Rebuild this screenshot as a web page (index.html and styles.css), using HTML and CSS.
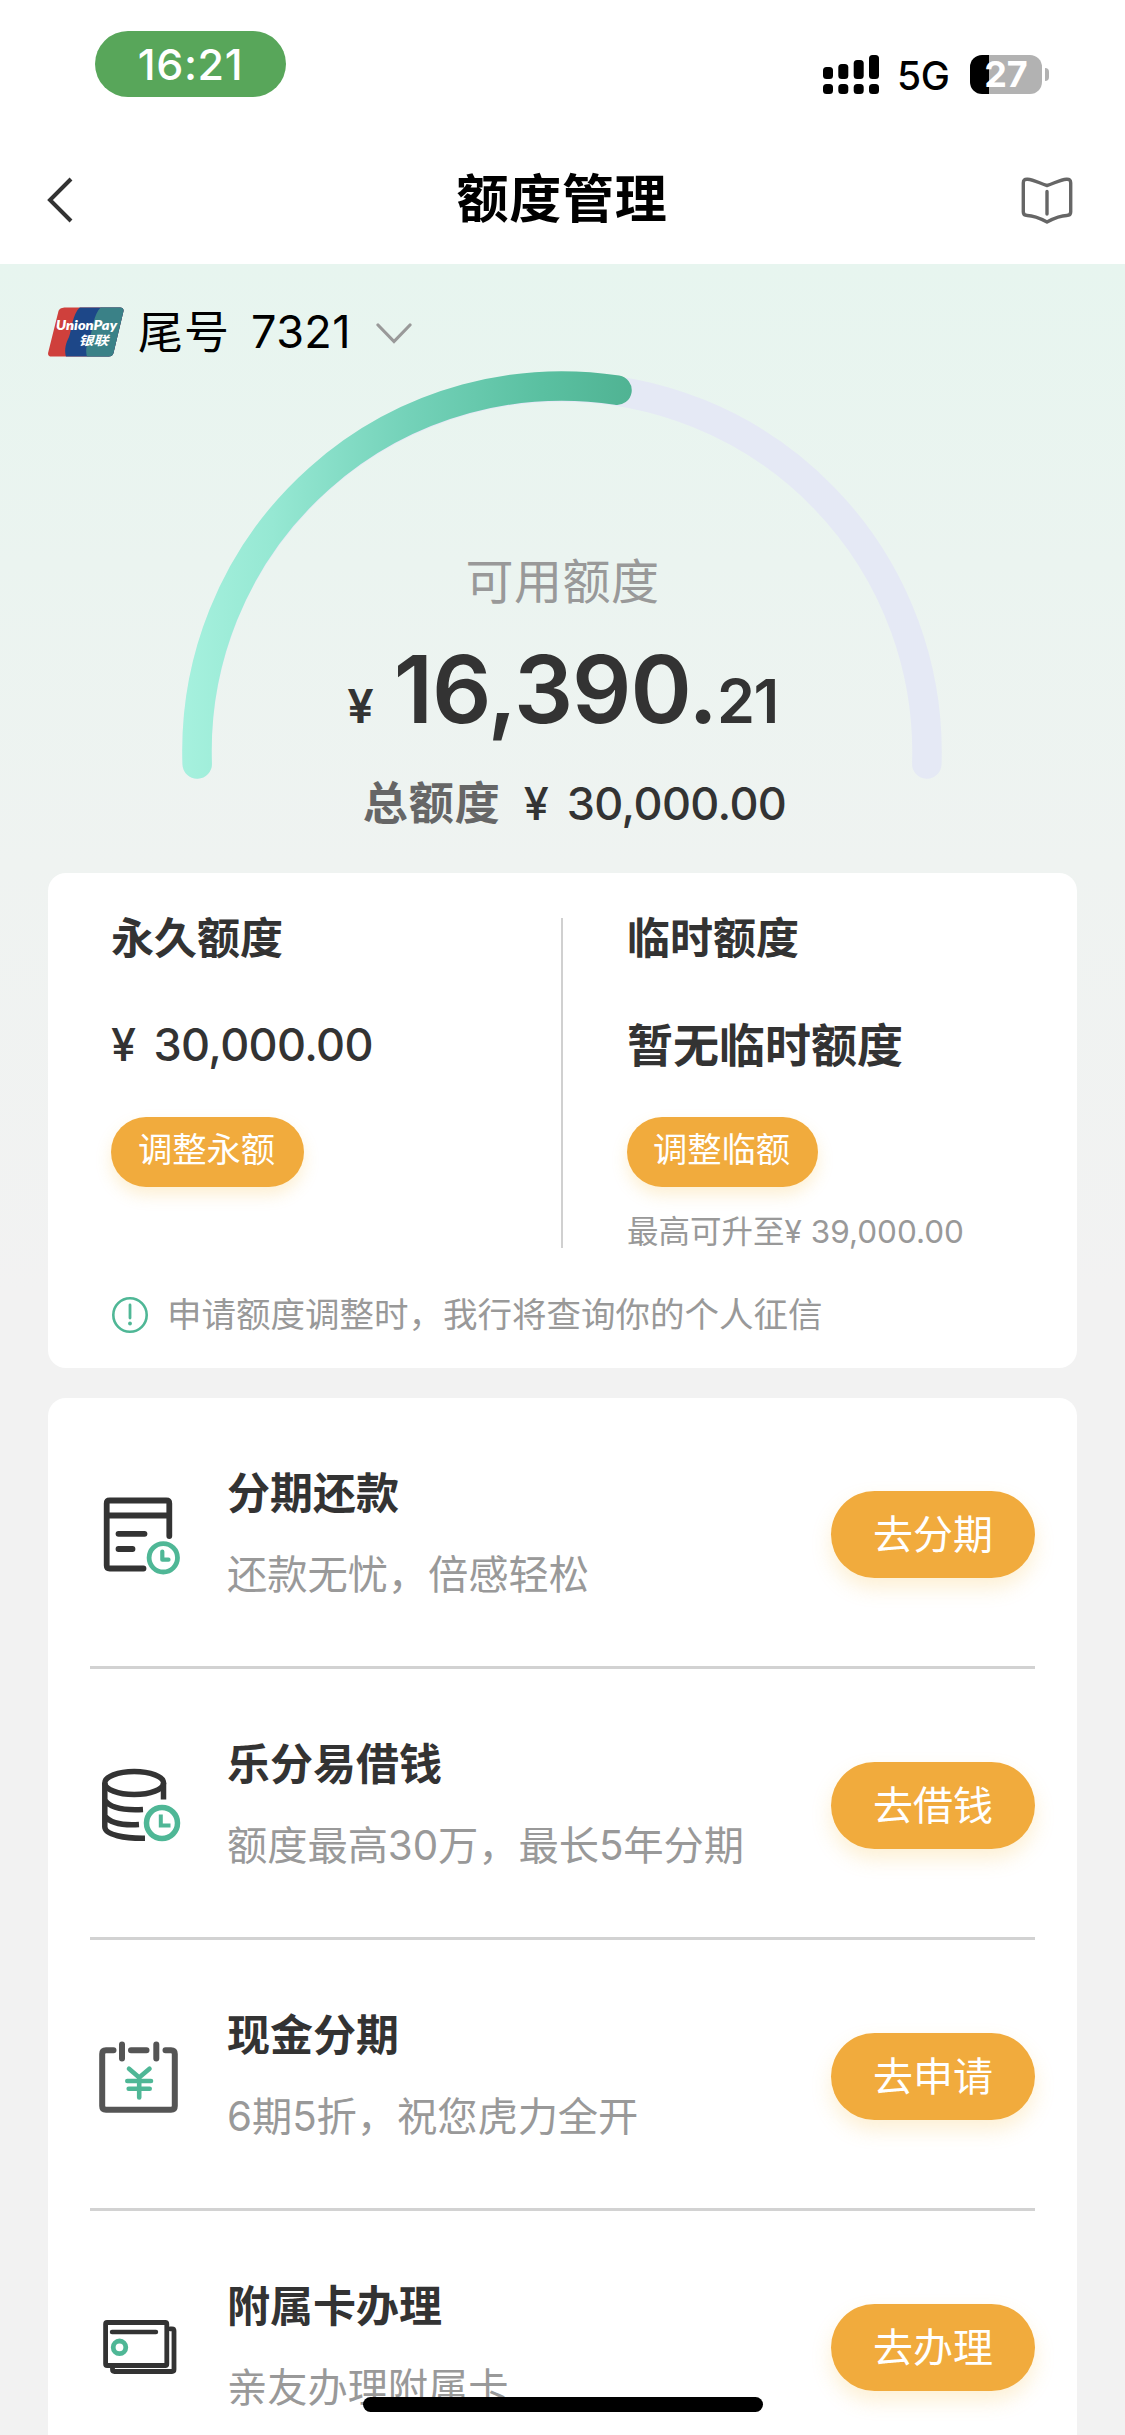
FILE: index.html
```html
<!DOCTYPE html>
<html lang="zh-CN">
<head>
<meta charset="utf-8">
<title>额度管理</title>
<link rel="stylesheet" href="styles.css">
</head>
<body>
<div class="screen">
  <header class="top">
    <div class="status">
      <div class="time"><span>16:21</span></div>
      <div class="status-right">
        <svg class="signal" width="56" height="40" viewBox="0 0 56 40">
          <g fill="#000"><rect x="0" y="12" width="10" height="12" rx="3.5"/><rect x="15.3" y="9" width="10" height="15" rx="3.5"/><rect x="30.7" y="5" width="10" height="19" rx="3.5"/><rect x="46" y="0" width="10" height="24" rx="3.5"/><rect x="0" y="29" width="10" height="10" rx="3.5"/><rect x="15.3" y="29" width="10" height="10" rx="3.5"/><rect x="30.7" y="29" width="10" height="10" rx="3.5"/><rect x="46" y="29" width="10" height="10" rx="3.5"/></g>
        </svg>
        <span class="net">5G</span>
        <span class="battery"><span>27</span></span>
        <span class="nub"></span>
      </div>
    </div>
    <nav class="nav">
      <svg class="back" width="28" height="46" viewBox="0 0 28 46"><path d="M25 2 4 23 25 44" fill="none" stroke="#333" stroke-width="4"/></svg>
      <h1>额度管理</h1>
      <svg class="book" width="52" height="48" viewBox="0 0 52 48"><path d="M26 9.500C20 8 13 3.500 6.500 3.200 3.500 3 2.300 4.500 2.300 7v29c0 2.500 1.500 3.500 4 3.500 7 0 14 3.500 19.700 6.500 5.700-3 12.700-6.500 19.700-6.500 2.500 0 4-1 4-3.500V7c0-2.500-1.200-4-4.200-3.800C39 3.500 32 8 26 9.500ZM26 15.500V38" fill="none" stroke="#666" stroke-width="3.400" stroke-linejoin="round" stroke-linecap="round"/></svg>
    </nav>
  </header>

  <main class="content">
    <div class="account">
      <svg class="unionpay" width="76" height="50" viewBox="0 0 76 50">
        <defs><clipPath id="plate"><path d="M17.500.5H72c2.700 0 4 1.600 3.400 4L65.500 46c-.6 2.400-2.300 3.500-4.800 3.500H3.500C.8 49.500-.4 48 .2 45.500L10.500 4C11.200 1.600 14.500.5 17.500.5Z"/></clipPath></defs>
        <g clip-path="url(#plate)"><path fill="#cf403c" d="M0 0h76v50H0z"/><path fill="#1d4788" d="M32 0h44v50H18c-2-8 0-14 3-20 3-8 3-22 11-30Z"/><path fill="#3a8187" d="M53 0h23v50H39c-2-8 0-14 3-20 3-8 3-22 11-30Z"/></g>
        <text class="up-en" x="8" y="22.500" textLength="61" lengthAdjust="spacingAndGlyphs">UnionPay</text>
        <text class="up-cn" x="30.500" y="38" textLength="30" lengthAdjust="spacingAndGlyphs">银联</text>
      </svg>
      <span class="tail">尾号</span>
      <span class="tail-no">7321</span>
      <svg class="down" width="36" height="22" viewBox="0 0 36 22"><path d="M2 2 18 18.500 34 2" fill="none" stroke="#999" stroke-width="3.200" stroke-linecap="round"/></svg>
    </div>

    <section class="gauge">
      <svg class="arc" width="762" height="412" viewBox="182 370 762 412">
        <defs><linearGradient id="used" gradientUnits="userSpaceOnUse" x1="182" y1="0" x2="632" y2="0"><stop offset="0" stop-color="#a6f1de"/><stop offset=".2" stop-color="#96e8d3"/><stop offset=".5" stop-color="#74d2b9"/><stop offset=".8" stop-color="#5ac0a1"/><stop offset="1" stop-color="#50b393"/></linearGradient></defs>
        <g fill="none" stroke-width="29.500" stroke-linecap="round">
          <path stroke="#e5e9f5" d="M197.200 764A365 365 0 1 1 926.800 764"/>
          <path stroke="url(#used)" d="M197.200 764A365 365 0 0 1 617 390.200"/>
        </g>
      </svg>
      <div class="gauge-text">
        <p class="avail">可用额度</p>
        <p class="amount"><span class="yen">¥</span><span class="int">16,390.</span><span class="dec">21</span></p>
        <p class="total"><span class="total-label">总额度</span><span class="yen">¥</span><span class="total-no">30,000.00</span></p>
      </div>
    </section>

    <section class="card quota">
      <div class="cols">
        <div class="col">
          <h2>永久额度</h2>
          <p class="val num"><span>¥</span><span>30,000.00</span></p>
          <button class="pill">调整永额</button>
        </div>
        <div class="col right">
          <h2>临时额度</h2>
          <p class="val">暂无临时额度</p>
          <button class="pill">调整临额</button>
          <p class="hint">最高可升至<span>¥ 39,000.00</span></p>
        </div>
      </div>
      <p class="notice">
        <svg width="38" height="38" viewBox="0 0 38 38"><circle cx="19" cy="19" r="16.700" fill="none" stroke="#4fb796" stroke-width="2.600"/><path d="M19 9v13" stroke="#4fb796" stroke-width="2.800" stroke-linecap="round"/><circle cx="19" cy="27.500" r="1.900" fill="#4fb796"/></svg>
        <span>申请额度调整时，我行将查询你的个人征信</span>
      </p>
    </section>

    <section class="card list">
      <div class="row">
        <svg width="110" height="130" viewBox="10 -3 110 130" fill="none" stroke-width="5.800" stroke-linecap="round" stroke-linejoin="round"><path stroke="#333" d="M89.300 66V33.500q0-3-3-3H29.700q-3 0-3 3V95.500q0 3 3 3H63.500M27 45.500H89M38.500 63.800H64.500M38.500 79H52.500"/><g stroke="#4fb796" stroke-width="4.800"><circle cx="83.300" cy="87.800" r="14.200"/><path stroke-width="4.200" d="M82.300 81.500V89.700H88.500"/></g></svg>
        <div class="info"><h3>分期还款</h3><p>还款无忧，倍感轻松</p></div>
        <button class="go">去分期</button>
      </div>
      <div class="row">
        <svg width="110" height="130" viewBox="10 -2 110 130" fill="none" stroke-width="5.500"><g stroke="#333"><ellipse cx="54.200" cy="43" rx="29.400" ry="11.500"/><path d="M83.500 43V59.500M24.800 43V87C25 95 45 98.500 65 98.200M24.800 60C30 68 45 70.500 63 69.500M24.800 76C30 83 42 85.500 59 84.500"/></g><g stroke="#4fb796"><circle cx="82" cy="83" r="15.500"/><path stroke-width="4" d="M80.800 74.500V85.500H90.500"/></g></svg>
        <div class="info"><h3>乐分易借钱</h3><p>额度最高30万，最长5年分期</p></div>
        <button class="go">去借钱</button>
      </div>
      <div class="row">
        <svg width="110" height="130" viewBox="10 -1 110 130" fill="none" stroke-width="6" stroke-linecap="round"><path stroke="#555" d="M33.500 40.300H26q-3.800 0-3.800 3.800V96q0 3.800 3.800 3.800H91q3.800 0 3.800-3.800V44.100q0-3.800-3.800-3.800H85.500M51 40.300H66.500M42 34.500V48.500M76.300 34.500V48.500"/><path stroke="#4fb796" stroke-width="4.600" d="M49 58.700 59.200 67.500 69.500 58.700M47.300 71H71M48.700 78.700H69.700M59.200 67.500V87.500"/></svg>
        <div class="info"><h3>现金分期</h3><p>6期5折，祝您虎力全开</p></div>
        <button class="go">去申请</button>
      </div>
      <div class="row">
        <svg width="110" height="130" viewBox="10 270 110 130" fill="none" stroke-width="4.800" stroke-linecap="round" stroke-linejoin="round"><g stroke="#333"><path d="M90 318.800H92q2 0 2 2V359.500q0 2-2 2H34.500q-2 0-2-2V358"/><rect x="25.600" y="312.500" width="61.200" height="43" rx="1.500"/><path stroke-width="4.400" d="M32 322H76"/></g><circle cx="39.500" cy="337.300" r="6.300" stroke="#4fb796" stroke-width="4.800"/></svg>
        <div class="info"><h3>附属卡办理</h3><p>亲友办理附属卡</p></div>
        <button class="go">去办理</button>
      </div>
    </section>
  </main>
  <div class="home-bar"></div>
</div>
</body>
</html>
```
FILE: styles.css
```css
* { box-sizing: border-box; margin: 0; padding: 0; }
body {
  font-family: Inter, "Noto Sans CJK SC", sans-serif;
  color: #333;
  background: #f2f2f2;
}
svg { display: block; flex: none; }
button { border: 0; font-family: inherit; color: #fff; background: #f1ab3d; white-space: nowrap; }
.screen { position: relative; width: 1125px; height: 2435px; overflow: hidden; }

.top { height: 264px; background: #fff; }
.status { display: flex; justify-content: space-between; height: 136px; padding: 31px 76px 0 95px; }
.time {
  display: flex; align-items: center; justify-content: center;
  width: 191px; height: 66px; border-radius: 33px;
  background: #58a65a; color: #fff; font-size: 43px; font-weight: 500; letter-spacing: 0.6px; line-height: 66px;
}
.status-right { display: flex; align-items: center; height: 39px; margin-top: 24px; color: #000; }
.net { margin-left: 18px; width: 73px; font-size: 39px; line-height: 39px; font-weight: 450; letter-spacing: -0.3px; padding-top: 2px; }
.battery {
  width: 72px; height: 39px; border-radius: 12px; color: #fff;
  background: linear-gradient(90deg, #000 0 19px, #b2b2b2 19px);
  font-size: 36px; font-weight: 700; line-height: 39px; text-align: center;
}
.nub { width: 4px; height: 13px; margin-left: 3px; border-radius: 0 5px 5px 0; background: #b2b2b2; }

.nav { display: flex; align-items: center; justify-content: space-between; height: 128px; padding: 0 52px 0 46px; }
.book { margin-top: -1px; }
.nav h1 { color: #000; font-size: 52px; font-weight: 600; letter-spacing: 0.7px; line-height: 60px; padding-left: 29px; }

.content { height: 2171px; padding: 0 48px; background: linear-gradient(180deg, #e7f5ef 0, #eff3f1 600px, #f2f2f2 1030px); }

.account { display: flex; align-items: center; height: 104px; padding-top: 32px; color: #000; font-size: 45px; line-height: 60px; }
.tail { margin-left: 14px; margin-top: 1px; letter-spacing: 1px; }
.tail-no { margin-left: 21px; letter-spacing: 0.4px; }
.down { margin-left: 25px; margin-top: 3px; }
.up-en { font: italic 800 13px Lato, sans-serif; fill: #fff; }
.up-cn { font: italic 700 12.500px/1 "Noto Sans CJK SC", sans-serif; fill: #fff; }

.gauge { display: grid; justify-content: center; height: 505px; }
.gauge > * { grid-area: 1 / 1; }
.arc { margin-top: 2px; }
.gauge-text { display: flex; flex-direction: column; align-items: center; padding-top: 184px; }
.avail { color: #999; font-size: 48px; letter-spacing: 0.5px; line-height: 60px; }
.amount { display: flex; align-items: baseline; margin-top: 27px; height: 100px; line-height: 100px; font-weight: 600; }
.amount .yen { font-size: 47px; }
.int { font-size: 93px; margin-left: 20px; letter-spacing: -1px; }
.dec { font-size: 61px; letter-spacing: -1.5px; }
.total { display: flex; align-items: baseline; margin-top: 35px; padding-left: 24px; font-size: 45px; line-height: 60px; font-weight: 500; }
.total-label { color: #666; letter-spacing: 1px; font-weight: 600; }
.total .yen { margin: 0 18px 0 23px; }
.total-no { letter-spacing: -0.6px; }

.card { border-radius: 18px; background: #fff; }
.quota { height: 495px; padding: 45px 0 0; }
.cols { display: grid; grid-template-columns: 515px 1fr; grid-template-rows: 330px; }
.col { padding-left: 63px; border-right: 2px solid #d0d0d0; display: flex; flex-direction: column; align-items: flex-start; }
.col.right { border: 0; padding-left: 64px; }
.col h2, .info h3 { font-size: 43px; line-height: 60px; font-weight: 600; }
.col h2 { margin-top: -10px; }
.val { margin-top: 47px; font-size: 46px; line-height: 60px; font-weight: 600; }
.num { font-weight: 500; font-size: 45px; display: flex; gap: 18px; letter-spacing: -0.6px; }
.pill {
  width: 193px; height: 70px; margin-top: 42px; padding: 0 2px 4px 0; border-radius: 35px; flex: none;
  font-size: 34.300px; line-height: 66px; box-shadow: 0 8px 16px rgba(246, 185, 60, .22);
}
.right .pill { width: 191px; }
.hint { margin-top: 25px; color: #999; font-size: 31.500px; line-height: 40px; white-space: nowrap; }
.notice { display: flex; align-items: center; gap: 18px; height: 50px; margin-top: 42px; padding-left: 63px; color: #999; font-size: 34.500px; line-height: 50px; }

.list { margin-top: 30px; height: 1120px; padding: 0 42px; }
.row { display: flex; align-items: center; height: 271px; border-bottom: 3px solid #d2d2d2; }
.info { flex: 1; margin-left: 27px; padding-top: 4px; }
.info p { margin-top: 22px; color: #999; font-size: 40.300px; line-height: 60px; letter-spacing: -0.08px; white-space: nowrap; }
.go {
  width: 204px; height: 87px; margin-top: 4px; border-radius: 44px; font-size: 40px; line-height: 87px;
  box-shadow: 0 10px 20px rgba(246, 185, 60, .22);
}
.home-bar { position: absolute; left: 363px; top: 2397px; width: 400px; height: 15px; border-radius: 8px; background: #000; }
```
